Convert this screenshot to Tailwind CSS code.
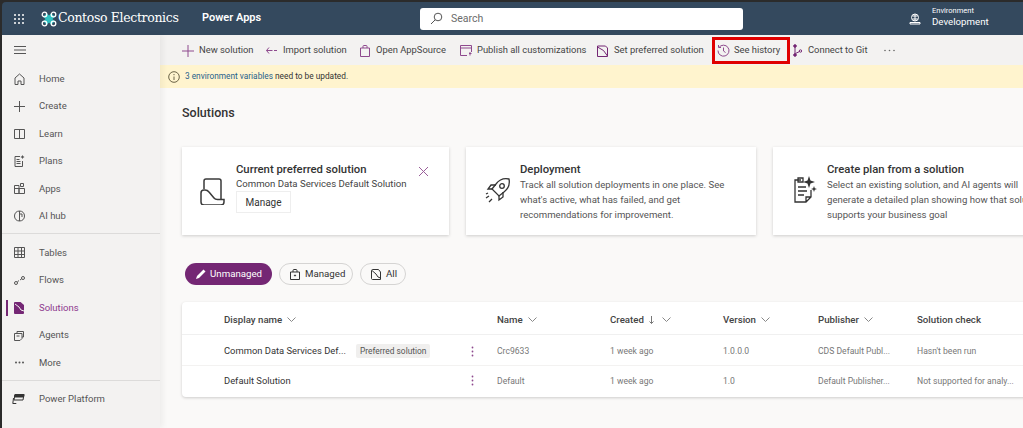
<!DOCTYPE html>
<html>
<head>
    <title>Solutions - Power Apps</title>
    <script src="https://cdn.jsdelivr.net/npm/@tailwindcss/browser@4"></script>
</head>
<body class="bg-[#2b2b2b] overflow-hidden font-['Roboto',sans-serif]">
<div class="w-[1023px] h-[428px] pt-[2px] pl-[2px] flex flex-col overflow-hidden">

    <!-- header -->
    <header class="h-[33px] shrink-0 bg-[#34495e] text-white flex items-center rounded-tl-[4px]">
        <svg class="ml-[11px] w-[12px] h-[12px]" viewBox="0 0 12 12" fill="#fff"><circle cx="2" cy="2" r="1"/><circle cx="6" cy="2" r="1"/><circle cx="10" cy="2" r="1"/><circle cx="2" cy="6" r="1"/><circle cx="6" cy="6" r="1"/><circle cx="10" cy="6" r="1"/><circle cx="2" cy="10" r="1"/><circle cx="6" cy="10" r="1"/><circle cx="10" cy="10" r="1"/></svg>
        <svg class="ml-[16px] w-[16px] h-[16px]" viewBox="0 0 16 16" fill="none"><path d="M4 4L12 12M12 4L4 12" stroke="#2fc0c0" stroke-width="5"/><circle cx="3.500" cy="3.500" r="2.300" stroke="#fff" stroke-width="1.300"/><circle cx="12.500" cy="3.500" r="2.300" stroke="#fff" stroke-width="1.300"/><circle cx="3.500" cy="12.500" r="2.300" stroke="#fff" stroke-width="1.300"/><circle cx="12.500" cy="12.500" r="2.300" stroke="#fff" stroke-width="1.300"/></svg>
        <span class="ml-[1px] w-[120px] text-[12.5px] font-['DejaVu_Serif',serif] tracking-[-0.35px] whitespace-nowrap">Contoso Electronics</span>
        <span class="ml-[24px] w-[60px] text-[11px] font-semibold whitespace-nowrap">Power Apps</span>
        <div class="ml-[158px] w-[323px] h-[22px] bg-white rounded-[3px] flex items-center pl-[10px] text-[#6b6b6b] text-[10.5px]">
            <svg class="w-[13px] h-[13px]" viewBox="0 0 13 13" fill="none" stroke="#555"><circle cx="8" cy="5" r="3.800"/><path d="M5.200 7.800L1 12"/></svg>
            <span class="ml-[8px]">Search</span>
        </div>
        <svg class="ml-[166px] w-[12px] h-[12px]" viewBox="0 0 12 12" fill="none" stroke="#fff"><circle cx="6" cy="4.500" r="3.500"/><path d="M3.500 3h5M3.500 6h5M6 1v7M1 9.500h10v1.500H1z"/></svg>
        <div class="ml-[11px] -mt-[3px] flex flex-col leading-none whitespace-nowrap">
            <span class="text-[7.5px] mb-[2px]">Environment</span>
            <span class="text-[9.7px]">Development</span>
        </div>
    </header>

    <div class="flex flex-1 min-h-0">
        <!-- left nav -->
        <nav class="w-[158px] shrink-0 bg-[#f3f2f1] text-[#555] text-[9.5px] shadow-[3px_0_6px_rgba(0,0,0,0.05)] z-10 relative">
            <div class="h-[30px] flex items-center pl-[12px]">
                <svg class="w-[12px] h-[10px]" viewBox="0 0 12 10" stroke="#555"><path d="M0 1.500h12M0 5h12M0 8.500h12"/></svg>
            </div>
            <div class="flex items-center h-[27.500px] pl-[12px] gap-[14px]">
                <svg class="w-[11px] h-[12px]" viewBox="0 0 11 12" fill="none" stroke="#555"><path d="M1 5l4.500-4 4.500 4v6.500H7V8H4v3.500H1z"/></svg>
                <span>Home</span>
            </div>
            <div class="flex items-center h-[27.500px] pl-[12px] gap-[14px]">
                <svg class="w-[11px] h-[11px]" viewBox="0 0 11 11" stroke="#555"><path d="M5.500 0v11M0 5.500h11"/></svg>
                <span>Create</span>
            </div>
            <div class="flex items-center h-[27.500px] pl-[12px] gap-[14px]">
                <svg class="w-[11px] h-[10px]" viewBox="0 0 11 10" fill="none" stroke="#555"><path d="M.500 .500h10v9H.500zM5.500 .500v9"/></svg>
                <span>Learn</span>
            </div>
            <div class="flex items-center h-[27.500px] pl-[12px] gap-[14px]">
                <svg class="w-[11px] h-[12px]" viewBox="0 0 11 12" fill="none" stroke="#555"><path d="M6 1.500H1v10h7.500V6M2.500 4.500h3M2.500 6.500h4M2.500 8.500h4"/><path d="M8.500 0l.7 1.300 1.300 .7-1.300 .7-.7 1.300-.7-1.300L6.500 2l1.300-.7z" fill="#555" stroke="none"/></svg>
                <span>Plans</span>
            </div>
            <div class="flex items-center h-[27.500px] pl-[12px] gap-[14px]">
                <svg class="w-[11px] h-[11px]" viewBox="0 0 11 11" fill="none" stroke="#555"><path d="M.500 2.500h4.500v8H.500zM5 5.500h5.500v5H5zM.500 5.500H5M6.500 3.500V.500h3v3z"/></svg>
                <span>Apps</span>
            </div>
            <div class="flex items-center h-[27.500px] pl-[12px] gap-[14px]">
                <svg class="w-[11px] h-[12px]" viewBox="0 0 11 12" fill="none" stroke="#555"><path d="M5.500 1C2.500 1 .500 3 .500 6s2 5 5 5 5-2 5-5-2-5-5-5zM5.500 1v10M5.500 4h2.500v3"/></svg>
                <span>AI hub</span>
            </div>
            <div class="h-[8px] border-b border-[#dcdbda] -mt-[4px] mb-[5px]"></div>
            <div class="flex items-center h-[27.500px] pl-[12px] gap-[14px]">
                <svg class="w-[11px] h-[11px]" viewBox="0 0 11 11" fill="none" stroke="#555"><path d="M.500 .500h10v10H.500zM.500 4h10M.500 7.500h10M4 .500v10M7.500 .500v10"/></svg>
                <span>Tables</span>
            </div>
            <div class="flex items-center h-[27.500px] pl-[12px] gap-[14px]">
                <svg class="w-[11px] h-[9px]" viewBox="0 0 11 9" fill="none" stroke="#555"><circle cx="2" cy="7" r="1.500"/><circle cx="9" cy="2" r="1.500"/><path d="M3.300 6l1.700-1.500M6 4l1.700-1.200"/></svg>
                <span>Flows</span>
            </div>
            <div class="flex items-center h-[27.500px] relative pl-[12px] gap-[14px] text-[#8e3a8e]">
                <div class="absolute left-[4px] top-[6px] w-[2px] h-[16px] bg-[#742774]"></div>
                <svg class="w-[11px] h-[12px]" viewBox="0 0 11 12"><path d="M1 0h5.500L10 3v8a1 1 0 0 1-1 1H1a1 1 0 0 1-1-1V1a1 1 0 0 1 1-1z" fill="#742774"/><path d="M1 2l4 3 2 3 3 1" fill="none" stroke="#f3f2f1"/></svg>
                <span>Solutions</span>
            </div>
            <div class="flex items-center h-[27.500px] pl-[12px] gap-[14px]">
                <svg class="w-[11px] h-[11px]" viewBox="0 0 11 11" fill="none" stroke="#555"><path d="M3 3V1.500h6.500V7H8M.500 3.500h7.500v5L6 10.500H.500zM2.500 6h3"/></svg>
                <span>Agents</span>
            </div>
            <div class="flex items-center h-[27.500px] pl-[12px] gap-[14px]">
                <svg class="w-[11px] h-[3px]" viewBox="0 0 11 3" fill="#555"><circle cx="2" cy="1.500" r="1"/><circle cx="5.500" cy="1.500" r="1"/><circle cx="9" cy="1.500" r="1"/></svg>
                <span>More</span>
            </div>
            <div class="h-[8px] border-b border-[#dcdbda] -mt-[4px] mb-[5px]"></div>
            <div class="flex items-center h-[27.500px] pl-[10px] gap-[14px]">
                <svg class="w-[13px] h-[12px]" viewBox="0 0 13 12" fill="none" stroke="#333"><path d="M3 1.500h9L11 7H2zM1.500 5L.800 10.500h3.500"/><path d="M3 1.500h9L11.500 4H2.500z" fill="#333"/></svg>
                <span>Power Platform</span>
            </div>
        </nav>

        <!-- main -->
        <main class="flex-1 min-w-0 bg-[#faf9f8] flex flex-col">
            <div class="h-[30px] shrink-0 bg-[#f3f2f1] flex items-center text-[9.4px] text-[#444] pl-[22px] pt-[1px] whitespace-nowrap">
                <svg class="w-[12px] h-[12px]" viewBox="0 0 12 12" stroke="#8e4a8e"><path d="M6 0v12M0 6h12"/></svg>
                <span class="ml-[5px] w-[56px]">New solution</span>
                <svg class="ml-[11px] w-[11px] h-[7px]" viewBox="0 0 11 7" fill="none" stroke="#8e4a8e"><path d="M3 .500L.500 3.500 3 6.500M.500 3.500h6M8 3.500h3"/></svg>
                <span class="ml-[6px] w-[66px]">Import solution</span>
                <svg class="ml-[11px] w-[10px] h-[12px]" viewBox="0 0 10 12" fill="none" stroke="#8e4a8e"><path d="M.500 3h9v8.500H.500zM3 3V1.200C3 .800 3.300 .500 3.700 .500h2.600c.4 0 .7 .3 .7 .7V3"/></svg>
                <span class="ml-[6px] w-[73px]">Open AppSource</span>
                <svg class="ml-[11px] w-[12px] h-[11px]" viewBox="0 0 12 11" fill="none" stroke="#8e4a8e"><path d="M7 10.500H.500V.500h11V7M.500 3h11M9 8.500h2.500M10 10.500V7"/></svg>
                <span class="ml-[5px] w-[109px]">Publish all customizations</span>
                <svg class="ml-[11px] w-[11px] h-[12px]" viewBox="0 0 11 12" fill="none" stroke="#742774"><path d="M.500 1h8l2 2v8.500H.500zM.500 2l6 3.500 4 5.500"/></svg>
                <span class="ml-[6px] w-[92px]">Set preferred solution</span>
                <div class="ml-[6px] w-[78px] h-[27px] border-[3px] border-[#e00000] flex items-center pl-[2px]">
                    <svg class="w-[13px] h-[13px] shrink-0" viewBox="0 0 13 13" fill="none" stroke="#8e4a8e"><path d="M2 3.500A5.500 5.500 0 1 1 1 6.500M1.500 1v2.500H4M6.500 3.500v3.500l2 1.500"/></svg>
                    <span class="ml-[4px]">See history</span>
                </div>
                <svg class="ml-[3px] w-[9px] h-[13px]" viewBox="0 0 9 13" fill="none" stroke="#742774"><circle cx="2" cy="2" r="1.300" fill="#742774"/><circle cx="2" cy="11" r="1.300" fill="#742774"/><circle cx="7.500" cy="7" r="1.200"/><path d="M2 3v7M2.500 9.500L6.500 7.500"/></svg>
                <span class="ml-[6px] w-[62px]">Connect to Git</span>
                <svg class="ml-[14px] w-[11px] h-[3px]" viewBox="0 0 11 3" fill="#666"><circle cx="1" cy="1.500" r=".8"/><circle cx="5.500" cy="1.500" r=".8"/><circle cx="10" cy="1.500" r=".8"/></svg>
            </div>

            <div class="h-[23px] shrink-0 bg-[#fff4ce] flex items-center pl-[8px] text-[8.3px] text-[#333]">
                <svg class="w-[12px] h-[12px]" viewBox="0 0 12 12" fill="none" stroke="#6b6346"><circle cx="6" cy="6" r="5.300"/><path d="M6 5.500v3.500M6 3v1.200"/></svg>
                <span class="ml-[5px]"><span class="text-[#1f5f8b]">3 environment variables</span> need to be updated.</span>
            </div>

            <div class="flex-1 min-h-0 pl-[22px] overflow-hidden">
                <h1 class="mt-[16px] text-[12.5px] font-medium text-[#333] leading-[18px]">Solutions</h1>

                <div class="mt-[25px] flex gap-[17px] w-[1100px]">
                    <div class="w-[267px] h-[88px] bg-white shadow-[0_1px_3px_rgba(0,0,0,0.18)] flex relative">
                        <svg class="ml-[18px] mt-[31px] w-[25px] h-[27px]" viewBox="0 0 25 27" fill="none" stroke="#3a3a3a" stroke-width="1.500"><path d="M4 11V3a2 2 0 0 1 2-2h13a2 2 0 0 1 2 2v18"/><path d="M1 15a3 3 0 0 1 3-3h1c2 0 3 .7 4 2l5 6c1 1.300 2 1.500 3.500 1.500H24v2.500a3 3 0 0 1-3 3H4a3 3 0 0 1-3-3z"/></svg>
                        <div class="ml-[11px] pt-[15px] whitespace-nowrap">
                            <div class="text-[11.3px] font-medium text-[#333] leading-[15px]">Current preferred solution</div>
                            <div class="text-[9.6px] text-[#444] leading-[14px]">Common Data Services Default Solution</div>
                            <button class="block w-[55px] h-[22px] bg-white border border-[#eee] text-[10px] text-[#333]">Manage</button>
                        </div>
                        <svg class="absolute left-[237px] top-[20px] w-[9px] h-[9px]" viewBox="0 0 9 9" stroke="#9a5f9a"><path d="M0 0l9 9M9 0L0 9"/></svg>
                    </div>
                    <div class="w-[290px] h-[88px] bg-white shadow-[0_1px_3px_rgba(0,0,0,0.18)] flex">
                        <svg class="ml-[19px] mt-[31px] w-[25px] h-[25px] shrink-0" viewBox="0 0 25 25" fill="none" stroke="#333" stroke-width="1.300"><path d="M24 1c-5-1-10 1-13 5L7 11l7 7 5-4c4-3 6-8 5-13z"/><circle cx="17" cy="8" r="2.300"/><path d="M7 11H3l3-4h5M14 18v4l4-3v-5M4 18l-3 2M7 21l-3 3M3 15l-2 1"/></svg>
                        <div class="ml-[10px] pt-[15px] whitespace-nowrap">
                            <div class="text-[11.3px] font-medium text-[#333] leading-[15px]">Deployment</div>
                            <div class="text-[9.6px] text-[#555] leading-[15px]">Track all solution deployments in one place. See<br>what's active, what has failed, and get<br>recommendations for improvement.</div>
                        </div>
                    </div>
                    <div class="w-[290px] h-[88px] bg-white shadow-[0_1px_3px_rgba(0,0,0,0.18)] flex">
                        <svg class="ml-[20px] mt-[29px] w-[24px] h-[27px] shrink-0" viewBox="0 0 24 27" fill="none" stroke="#333" stroke-width="1.300"><path d="M8 4H2v22h11l5-5V14M13 26v-5h5M5 11h8M5 15h9M5 19h6M5 2h5v4H5z"/><path d="M16 0l1.500 4.500L22 6l-4.500 1.500L16 12l-1.500-4.500L10 6l4.500-1.500zM21 10l.8 2.200L24 13l-2.200 .8L21 16l-.8-2.200L18 13l2.200-.8z" fill="#333" stroke="none"/></svg>
                        <div class="ml-[10px] pt-[15px] whitespace-nowrap">
                            <div class="text-[11.3px] font-medium text-[#333] leading-[15px]">Create plan from a solution</div>
                            <div class="text-[9.6px] text-[#555] leading-[15px]">Select an existing solution, and AI agents will<br>generate a detailed plan showing how that solution<br>supports your business goal</div>
                        </div>
                    </div>
                </div>

                <div class="mt-[28px] ml-[3px] flex gap-[7px] text-[9.7px] h-[22px]">
                    <div class="w-[87px] rounded-full bg-[#742774] text-white flex items-center pl-[11px] gap-[4px]">
                        <svg class="w-[10px] h-[10px]" viewBox="0 0 10 10" fill="#fff"><path d="M7.500 .500l2 2L3 9 0 10l1-3z"/></svg>
                        <span>Unmanaged</span>
                    </div>
                    <div class="w-[74px] rounded-full border border-[#d5d4d3] text-[#333] flex items-center pl-[10px] gap-[5px]">
                        <svg class="w-[10px] h-[11px]" viewBox="0 0 10 11" fill="none" stroke="#333"><path d="M.500 3h9v7.500H.500zM3 3V1.500C3 .900 3.400 .500 4 .500h2c.6 0 1 .4 1 1V3"/><circle cx="5" cy="6.500" r=".6" fill="#333"/></svg>
                        <span>Managed</span>
                    </div>
                    <div class="w-[46px] rounded-full border border-[#d5d4d3] text-[#333] flex items-center pl-[10px] gap-[5px]">
                        <svg class="w-[10px] h-[11px]" viewBox="0 0 10 11" fill="none" stroke="#333"><path d="M.500 1.500C.500 1 1 .500 1.500 .500h6L9.500 3v7.500h-8c-.5 0-1-.5-1-1zM1 1.500l4 3.500 2 3 2.500 1"/></svg>
                        <span>All</span>
                    </div>
                </div>

                <div class="mt-[17px] w-[860px] rounded-[4px] bg-white shadow-[0_1px_3px_rgba(0,0,0,0.18)]">
                    <div class="grid grid-cols-[42px_273px_113px_113px_95px_99px_1fr] h-[33px] pt-[4px] items-center border-b border-[#f0f0f0] text-[9.7px] font-medium text-[#444] whitespace-nowrap">
                        <div></div>
                        <div class="flex items-center gap-[5px]">Display name <svg class="w-[9px] h-[5px]" viewBox="0 0 9 5" fill="none" stroke="#888"><path d="M.500 .500l4 4 4-4"/></svg></div>
                        <div class="flex items-center gap-[5px]">Name <svg class="w-[9px] h-[5px]" viewBox="0 0 9 5" fill="none" stroke="#888"><path d="M.500 .500l4 4 4-4"/></svg></div>
                        <div class="flex items-center gap-[5px]">Created <svg class="w-[5px] h-[8px]" viewBox="0 0 5 8" fill="none" stroke="#777"><path d="M2.500 0v7.500M.500 5.500l2 2 2-2"/></svg><svg class="ml-[3px] w-[9px] h-[5px]" viewBox="0 0 9 5" fill="none" stroke="#888"><path d="M.500 .500l4 4 4-4"/></svg></div>
                        <div class="flex items-center gap-[5px]">Version <svg class="w-[9px] h-[5px]" viewBox="0 0 9 5" fill="none" stroke="#888"><path d="M.500 .500l4 4 4-4"/></svg></div>
                        <div class="flex items-center gap-[5px]">Publisher <svg class="w-[9px] h-[5px]" viewBox="0 0 9 5" fill="none" stroke="#888"><path d="M.500 .500l4 4 4-4"/></svg></div>
                        <div>Solution check</div>
                    </div>
                    <div class="grid grid-cols-[42px_273px_113px_113px_95px_99px_1fr] h-[31px] pt-[2px] items-center border-b border-[#f3f2f1] text-[8.6px] text-[#777] whitespace-nowrap">
                        <div></div>
                        <div class="flex items-center relative">
                            <span class="text-[9.4px] text-[#333]">Common Data Services Def...</span>
                            <span class="ml-[10px] px-[4px] h-[14px] leading-[14px] bg-[#f0efee] rounded-[2px] text-[8.4px] text-[#555]">Preferred solution</span>
                            <svg class="absolute left-[247px] top-[2px] w-[3px] h-[11px]" viewBox="0 0 3 11" fill="#8e4a8e"><circle cx="1.500" cy="1.500" r=".9"/><circle cx="1.500" cy="5.500" r=".9"/><circle cx="1.500" cy="9.500" r=".9"/></svg>
                        </div>
                        <div>Crc9633</div>
                        <div>1 week ago</div>
                        <div>1.0.0.0</div>
                        <div>CDS Default Publ...</div>
                        <div>Hasn't been run</div>
                    </div>
                    <div class="grid grid-cols-[42px_273px_113px_113px_95px_99px_1fr] h-[31px] items-center text-[8.6px] text-[#777] whitespace-nowrap">
                        <div></div>
                        <div class="flex items-center relative">
                            <span class="text-[9.4px] text-[#333]">Default Solution</span>
                            <svg class="absolute left-[247px] top-[1px] w-[3px] h-[11px]" viewBox="0 0 3 11" fill="#8e4a8e"><circle cx="1.500" cy="1.500" r=".9"/><circle cx="1.500" cy="5.500" r=".9"/><circle cx="1.500" cy="9.500" r=".9"/></svg>
                        </div>
                        <div>Default</div>
                        <div>1 week ago</div>
                        <div>1.0</div>
                        <div>Default Publisher...</div>
                        <div>Not supported for analy...</div>
                    </div>
                </div>
            </div>
        </main>
    </div>
</div>
</body>
</html>
